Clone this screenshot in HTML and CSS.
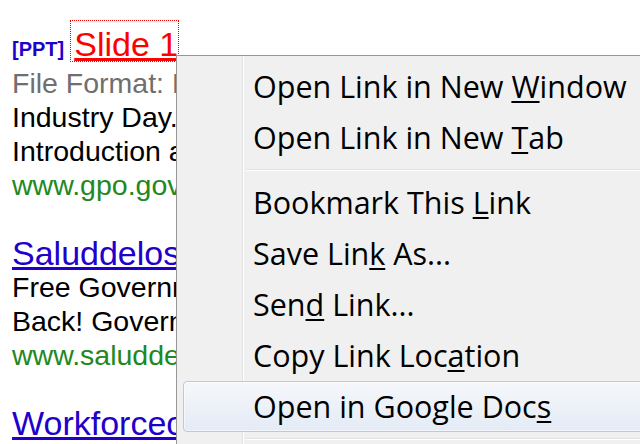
FILE: index.html
```html
<!DOCTYPE html>
<html lang="en">
<head>
    <meta charset="UTF-8">
    <meta name="viewport" content="width=device-width, initial-scale=1.0">
    <title>Search results - context menu</title>
    <link rel="stylesheet" href="styles.css">
</head>
<body>
    <div class="results">
        <div class="result">
            <div class="title"><span class="filetype">[PPT]</span><a class="link focused" href="#">Slide 1</a></div>
            <div class="line meta">File Format: Microsoft</div>
            <div class="line">Industry Day. GPO</div>
            <div class="line">Introduction and</div>
            <div class="line url">www.gpo.gov/pro</div>
        </div>

        <div class="result">
            <div class="title"><a class="link" href="#">Saluddelosninos</a></div>
            <div class="line">Free Government</div>
            <div class="line">Back! Government</div>
            <div class="line url">www.saluddelos</div>
        </div>

        <div class="result">
            <div class="title"><a class="link" href="#">Workforcecenter</a></div>
        </div>
    </div>

    <ul class="context-menu">
        <li class="item">Open Link in New <u>W</u>indow</li>
        <li class="item">Open Link in New <u>T</u>ab</li>
        <li class="separator"></li>
        <li class="item">Bookmark This <u>L</u>ink</li>
        <li class="item">Save Lin<u>k</u> As...</li>
        <li class="item">Sen<u>d</u> Link...</li>
        <li class="item">Copy Link Loc<u>a</u>tion</li>
        <li class="item active">Open in Google Doc<u>s</u></li>
        <li class="separator"></li>
    </ul>
</body>
</html>
```

FILE: styles.css
```css
html, body {
    margin: 0;
    height: 100%;
}
body {
    background-color: #FFF;
    font-family: "Liberation Sans", Arial, sans-serif;
    color: #000;
    overflow: hidden;
}
.results {
    padding: 20px 0 0 12px;
}
.result {
    margin-bottom: 34px;
    white-space: nowrap;
}
.title {
    font-size: 34px;
    line-height: 34px;
}
.filetype {
    font-size: 20px;
    font-weight: bold;
    color: #2200CC;
    margin-right: 6px;
}
.link {
    color: #2200CC;
    text-decoration: underline;
}
.link.focused {
    display: inline-block;
    color: #FF0000;
    line-height: 33px;
    padding: 7px 0 0 3px;
    border: 1px dotted #FF0000;
}
.line {
    font-size: 28.5px;
    line-height: 34px;
}
.meta {
    color: #6F6F6F;
}
.url {
    color: #228822;
}

/* context menu sits over the page */
.context-menu {
    position: absolute;
    left: 176px;
    top: 55px;
    width: 470px;
    height: 400px;
    margin: 0;
    padding: 5px 0 0 0;
    list-style: none;
    border: 1px solid #979797;
    background:
        linear-gradient(to right, transparent 65px, #E2E3E3 65px, #E2E3E3 66px, #FFF 66px, #FFF 67px, transparent 67px),
        #F0F0F0;
    font-family: "Open Sans", "Noto Sans", sans-serif;
    font-size: 30.5px;
    color: #000;
}
.item {
    height: 51px;
    line-height: 51px;
    margin: 0 3px 0 6px;
    padding-left: 70px;
    white-space: nowrap;
    box-sizing: border-box;
}
.item u {
    text-decoration-thickness: 2px;
    text-underline-offset: 3px;
}
.item.active {
    line-height: 49px;
    padding-left: 69px;
    border: 1px solid #AECCF1;
    border-radius: 4px;
    background: linear-gradient(to bottom, #F5F7FA, #E4EBF6);
    box-shadow: inset 0 0 0 1px rgba(255, 255, 255, 0.5);
}
.separator {
    height: 1px;
    margin: 6px 0 6px 69px;
    background-color: #E2E3E3;
    border-bottom: 1px solid #FFF;
}
```
